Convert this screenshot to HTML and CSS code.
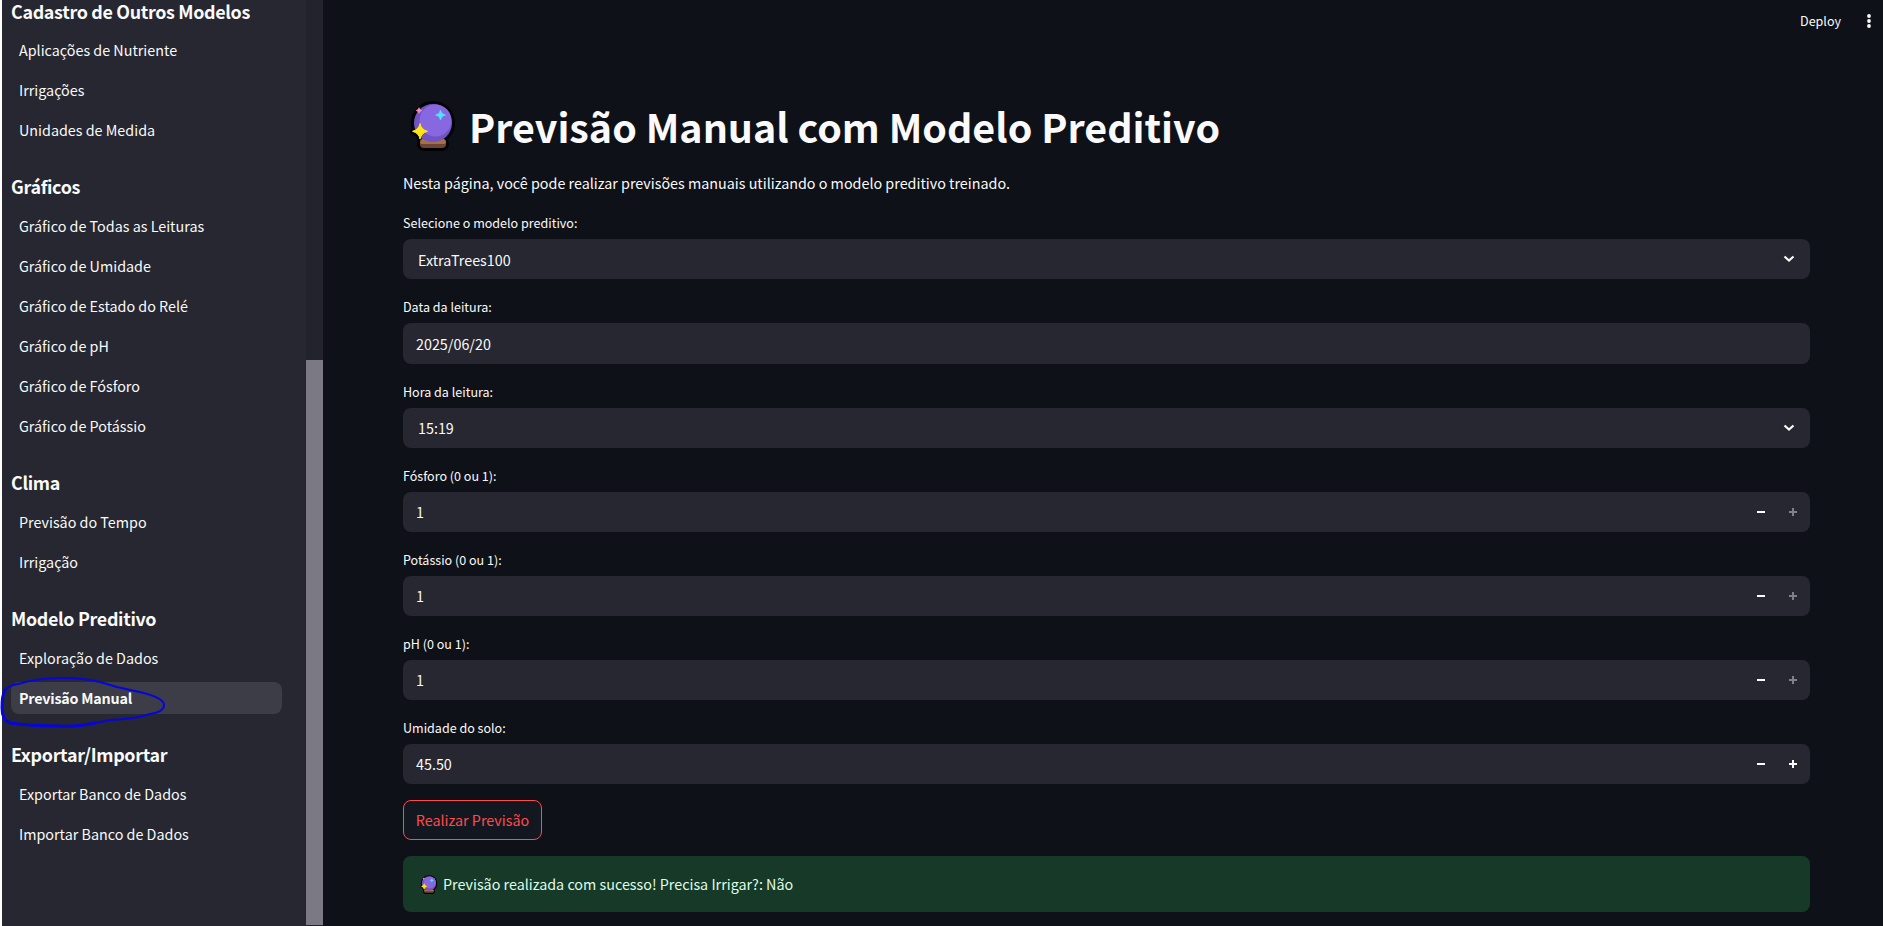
FILE: index.html
```html
<!DOCTYPE html>
<html lang="pt-BR">
<head>
<meta charset="utf-8">
<title>Previsão Manual</title>
<link rel="stylesheet" href="styles.css">
</head>
<body>
<svg width="0" height="0" class="defs">
  <symbol id="ball" viewBox="0 0 48 50">
    <g fill="#020204" stroke="#020204" stroke-width="6" stroke-linejoin="round">
      <circle cx="24" cy="22" r="19"/>
      <rect x="11" y="39" width="26" height="8" rx="4"/>
      <path d="M11 23l2.300 5 4.700 2.300-4.700 2.300L11 37l-2.300-4.400L4 30.300l4.700-2.300z"/>
    </g>
    <rect x="11" y="38" width="26" height="9" rx="4" fill="#6d4534"/>
    <path d="M13 38h22q2 1 2 3t-3 2H14q-3 0-3-2t2-3z" fill="#a56f4a"/>
    <circle cx="24" cy="22" r="19" fill="#7153c4"/>
    <circle cx="26.500" cy="19.500" r="16" fill="#8768e0"/>
    <path d="M11 22.500q1 6 7.500 7.800q-6.500 1.800-7.500 7.800q-1-6-7.500-7.800q6.500-1.800 7.500-7.800z" fill="#ffe612" stroke="#ffe612"/>
    <path d="M31.500 9l1.600 3.500 3.400 1.500-3.400 1.500-1.600 3.500-1.600-3.500-3.400-1.500 3.400-1.500z" fill="#50e2ff" stroke="#50e2ff" stroke-width=".6"/>
    <path d="M10 6l1.200 2.300 2.300 1.200-2.300 1.200L10 13l-1.200-2.300-2.300-1.200 2.300-1.200z" fill="#ee8fbc"/>
  </symbol>
  <symbol id="chevron" viewBox="0 0 12 8"><path d="M1.500 1.500L6 5.500l4.500-4" fill="none" stroke="currentColor" stroke-width="2.200"/></symbol>
  <symbol id="minus" viewBox="0 0 8 8"><path d="M0 3h8v2H0z" fill="currentColor"/></symbol>
  <symbol id="plus" viewBox="0 0 8 8"><path d="M0 3h3V0h2v3h3v2H5v3H3V5H0z" fill="currentColor"/></symbol>
</svg>
<div class="app">
  <aside class="sidebar">
    <nav class="nav">
      <h2>Cadastro de Outros Modelos</h2>
      <a>Aplicações de Nutriente</a>
      <a>Irrigações</a>
      <a>Unidades de Medida</a>
      <h2>Gráficos</h2>
      <a>Gráfico de Todas as Leituras</a>
      <a>Gráfico de Umidade</a>
      <a>Gráfico de Estado do Relé</a>
      <a>Gráfico de pH</a>
      <a>Gráfico de Fósforo</a>
      <a>Gráfico de Potássio</a>
      <h2>Clima</h2>
      <a>Previsão do Tempo</a>
      <a>Irrigação</a>
      <h2>Modelo Preditivo</h2>
      <a>Exploração de Dados</a>
      <a class="active">Previsão Manual</a>
      <h2>Exportar/Importar</h2>
      <a>Exportar Banco de Dados</a>
      <a>Importar Banco de Dados</a>
    </nav>
    <div class="scroll"><div class="thumb"></div></div>
    <svg class="mark" viewBox="0 0 170 56" fill="none" stroke="#0505dc" stroke-linecap="round" stroke-linejoin="round">
      <path stroke-width="2" d="M5 14Q10 9 18 8Q38 2 62 2Q84 2 100 6Q118 12 135 15Q164 21 164 29Q164 36 150 38Q135 43 110 44L90 48"/>
      <path stroke-width="3" d="M95 47Q75 51 60 50Q30 50 10 47Q2 44 2 32Q2 19 5 14"/>
    </svg>
  </aside>
  <main class="main">
    <header class="toolbar">
      <span>Deploy</span>
      <svg width="4" height="14" viewBox="0 0 4 14" fill="#fafafa"><circle cx="2" cy="2" r="1.900"/><circle cx="2" cy="7" r="1.900"/><circle cx="2" cy="12" r="1.900"/></svg>
    </header>
    <section class="content">
      <h1><svg class="ball"><use href="#ball"/></svg><span>Previsão Manual com Modelo Preditivo</span></h1>
      <p class="intro">Nesta página, você pode realizar previsões manuais utilizando o modelo preditivo treinado.</p>
      <div class="field"><label>Selecione o modelo preditivo:</label><div class="input select model"><span>ExtraTrees100</span><svg class="chev"><use href="#chevron"/></svg></div></div>
      <div class="field"><label>Data da leitura:</label><div class="input date"><span>2025/06/20</span></div></div>
      <div class="field"><label>Hora da leitura:</label><div class="input select"><span>15:19</span><svg class="chev"><use href="#chevron"/></svg></div></div>
      <div class="field"><label>Fósforo (0 ou 1):</label><div class="input"><span>1</span><svg class="step"><use href="#minus"/></svg><svg class="step off"><use href="#plus"/></svg></div></div>
      <div class="field"><label>Potássio (0 ou 1):</label><div class="input"><span>1</span><svg class="step"><use href="#minus"/></svg><svg class="step off"><use href="#plus"/></svg></div></div>
      <div class="field"><label>pH (0 ou 1):</label><div class="input"><span>1</span><svg class="step"><use href="#minus"/></svg><svg class="step off"><use href="#plus"/></svg></div></div>
      <div class="field"><label>Umidade do solo:</label><div class="input"><span>45.50</span><svg class="step"><use href="#minus"/></svg><svg class="step"><use href="#plus"/></svg></div></div>
      <button class="run">Realizar Previsão</button>
      <div class="alert"><svg class="ball"><use href="#ball"/></svg><span>Previsão realizada com sucesso! Precisa Irrigar?: Não</span></div>
    </section>
  </main>
</div>
</body>
</html>
```
FILE: styles.css
```css
* { box-sizing: border-box; }
body {
  margin: 0;
  background: #0e1117;
  color: #fafafa;
  font: 14.33px/24px "Noto Sans CJK JP", "Noto Sans CJK SC", sans-serif;
  white-space: nowrap;
  overflow: hidden;
}
.defs { position: absolute; }
.app { display: flex; height: 926px; overflow: hidden; }

.sidebar {
  position: relative;
  display: flex;
  justify-content: space-between;
  width: 323px;
  flex: none;
  background: #262730;
  border-left: 2px solid #fff;
}
.nav { width: 280px; padding-left: 9px; }
.nav h2 { margin: 0; height: 64px; padding-top: 24px; font-size: 17.9px; line-height: 32px; font-weight: 700; letter-spacing: -0.33px; }
.nav h2:first-child { height: 34px; padding: 0; line-height: 22px; }
.nav a {
  display: block;
  height: 32px;
  margin-bottom: 8px;
  padding: 0 8px;
  border-radius: 8px;
  line-height: 32px;
}
.nav a:has(+ h2) { margin-bottom: 0; }
.nav .active { background: #3c3d47; font-weight: 700; letter-spacing: -0.22px; }
.scroll { width: 17px; padding-top: 360px; background: #22232d; }
.thumb { height: 565px; background: #7b7a84; }
.mark { position: absolute; left: -2px; top: 676px; width: 170px; height: 56px; }

.main { flex: 1; padding-right: 73px; }
.toolbar {
  display: flex;
  justify-content: flex-end;
  align-items: center;
  gap: 26px;
  height: 42px;
  margin-right: -61px;
  font-size: 12.54px;
}
.content { display: flex; flex-direction: column; gap: 16px; padding: 57px 0 0 80px; }
h1 { display: flex; align-items: center; margin: 0; height: 56px; padding-bottom: 2px; font-size: 39.4px; line-height: 54px; font-weight: 700; }
h1 .ball { width: 48px; height: 50px; margin: 0 12px 0 6px; }
.intro { margin: 0; }
label { display: block; height: 28px; font-size: 12.54px; line-height: 24px; }
.input {
  display: flex;
  align-items: center;
  height: 40px;
  padding: 0 13px;
  border-radius: 8px;
  background: #262730;
}
.input span { flex: 1; }
.select { padding: 0 15px; }
.model span { padding-top: 2px; }
.date { height: 41px; }
.chev { width: 12px; height: 8px; }
.step { width: 8px; height: 8px; margin-left: 24px; }
.off { color: #808188; }
.run {
  align-self: flex-start;
  height: 40px;
  width: 139px;
  padding: 0;
  border: 1px solid #ff4b4b;
  border-radius: 8px;
  background: #131720;
  color: #ff4b4b;
  font: inherit;
}
.alert {
  display: flex;
  align-items: center;
  height: 56px;
  padding: 0 17px;
  border-radius: 8px;
  background: #173928;
  color: #dffde9;
}
.alert .ball { width: 18px; height: 19px; margin-right: 5px; }
```
